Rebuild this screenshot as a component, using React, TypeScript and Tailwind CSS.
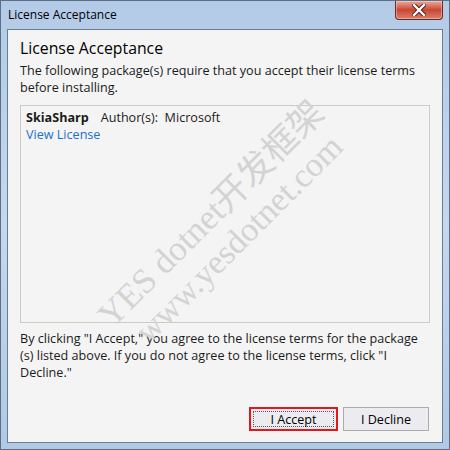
import React from "react";

const ui = { fontFamily: '"Open Sans", "Noto Sans", sans-serif' };
const mark = { fontFamily: '"Liberation Serif", "Noto Sans CJK SC", serif' };

function CloseButton() {
  return (
    <div className="absolute top-0 right-[6px] w-[48px] h-[19px] rounded-b-[4px] border border-t-0 border-[#6b2a22] bg-gradient-to-b from-[#e9a99c] via-[#c9452f] to-[#d98070] flex items-center justify-center shadow-[inset_0_0_0_1px_rgba(255,255,255,0.35)]">
      <svg width="14" height="12" viewBox="0 0 14 12">
        <path d="M2 1 L12 11 M12 1 L2 11" stroke="#4a1b14" strokeWidth="4.2" strokeLinecap="square" />
        <path d="M2 1 L12 11 M12 1 L2 11" stroke="#ffffff" strokeWidth="2.4" strokeLinecap="square" />
      </svg>
    </div>
  );
}

export default function App() {
  return (
    <div className="relative w-[450px] h-[450px] overflow-hidden bg-gradient-to-b from-[#b3cbe7] via-[#c4d8ee] to-[#b1c9e5] border border-[#5b6f88] flex flex-col" style={ui}>
      <div className="relative h-[28px] flex items-center pl-[7px] text-[12px] text-black">
        License Acceptance
        <CloseButton />
      </div>

      <div className="mx-[6px] mb-[6px] flex-1 border border-[#6d7d90] bg-[#f4f4f4] pt-[6px] px-[12px] pb-[11px] flex flex-col text-[12.6px] leading-[17px] text-[#1b1b1b]">
        <div className="text-[15.8px] leading-[24px] text-black">License Acceptance</div>
        <div className="mt-[2px] whitespace-nowrap">
          The following package(s) require that you accept their license terms
          <br />
          before installing.
        </div>

        <div className="mt-[9px] h-[218px] border border-[#cdccc1] px-[5px] pt-[3px]">
          <div className="flex gap-[12px] whitespace-nowrap">
            <span className="font-bold">SkiaSharp</span>
            <span>Author(s):&nbsp; Microsoft</span>
          </div>
          <div className="text-[#1c6fcf]">View License</div>
        </div>

        <div className="mt-[7px] whitespace-nowrap">
          By clicking "I Accept," you agree to the license terms for the package
          <br />
          (s) listed above. If you do not agree to the license terms, click "I
          <br />
          Decline."
        </div>

        <div className="mt-auto flex justify-end gap-[5px] pr-[1px]">
          <button className="w-[89px] h-[24px] border-2 border-[#e8141b] bg-[#ececf0] p-[2px] text-[12.6px] text-black">
            <span className="flex h-full w-full items-center justify-center border border-dotted border-[#555]">I Accept</span>
          </button>
          <button className="w-[86px] h-[24px] border border-[#acacac] bg-[#ececf0] text-[12.6px] text-black flex items-center justify-center">
            I Decline
          </button>
        </div>
      </div>

      <div className="pointer-events-none absolute left-[210px] top-[213px] -translate-x-1/2 -translate-y-1/2 -rotate-45 whitespace-nowrap text-[35px] leading-none text-[#d3d3d3]" style={mark}>
        YES dotnet开发框架
      </div>
      <div className="pointer-events-none absolute left-[238px] top-[238px] -translate-x-1/2 -translate-y-1/2 -rotate-45 whitespace-nowrap text-[34px] leading-none text-[#d3d3d3]" style={mark}>
        www.yesdotnet.com
      </div>
    </div>
  );
}
